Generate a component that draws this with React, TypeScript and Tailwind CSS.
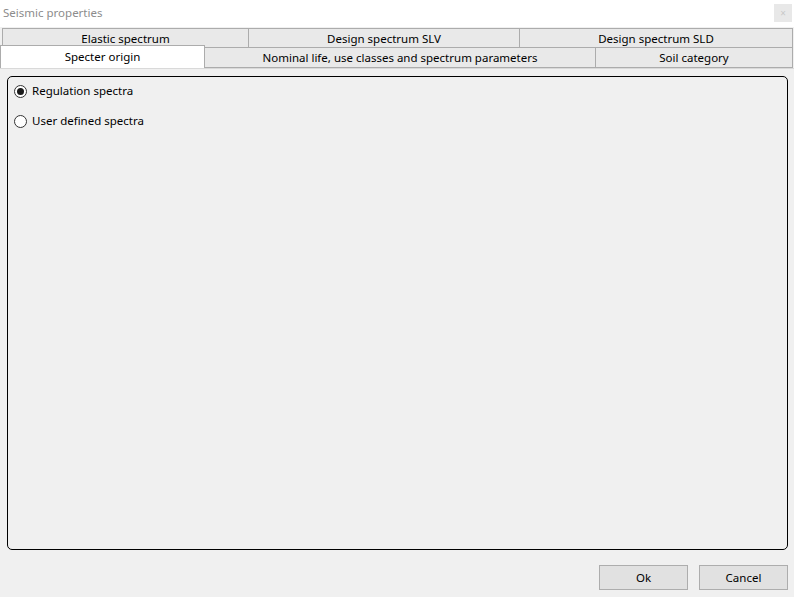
import { useState } from "react"

type Tab = {
    key: string
    label: string
    width: string
}

const topTabs: Array<Tab> = [
    { key: "elastic", label: "Elastic spectrum", width: "w-[247px]" },
    { key: "slv", label: "Design spectrum SLV", width: "w-[272px]" },
    { key: "sld", label: "Design spectrum SLD", width: "w-[274px]" },
]

const bottomTabs: Array<Tab> = [
    { key: "origin", label: "Specter origin", width: "w-[205px]" },
    { key: "nominal", label: "Nominal life, use classes and spectrum parameters", width: "w-[392px]" },
    { key: "soil", label: "Soil category", width: "w-[198px]" },
]

function Radio(props: { checked: boolean, label: string, onClick: () => void }) {
    return (
        <label className="flex items-center gap-[5px] h-[16px] cursor-default" onClick={props.onClick}>
            <span className="w-[13px] h-[13px] rounded-full border border-[#333] bg-white flex items-center justify-center">
                {props.checked ? <span className="w-[7px] h-[7px] rounded-full bg-[#1a1a1a]" /> : null}
            </span>
            <span className="text-[11.5px] text-black">{props.label}</span>
        </label>
    )
}

export default function App() {

    const [selected, setSelected] = useState("origin")
    const [spectra, setSpectra] = useState("regulation")

    return (
        <div className="w-[794px] h-[597px] bg-[#f0f0f0] flex flex-col font-['Noto_Sans','Open_Sans',sans-serif] overflow-hidden">
            {/* title bar */}
            <div className="h-[27px] bg-white flex justify-between items-start shrink-0">
                <span className="pl-[3px] pt-[4px] text-[11.5px] text-[#8c8c8c]">Seismic properties</span>
                <div className="mt-[4px] mr-[2px] w-[18px] h-[18px] bg-[#e8e8e8] flex items-center justify-center text-[10px] text-[#c8c8c8] leading-none">×</div>
            </div>

            {/* tabs */}
            <div className="flex flex-col pt-[1px] shrink-0">
                <div className="flex pl-[2px] h-[20px]">
                    {topTabs.map((tab) => (
                        <button
                            key={tab.key}
                            onClick={() => setSelected(tab.key)}
                            className={`${tab.width} h-[20px] pt-[1px] border border-[#acacac] -ml-px first:ml-0 bg-[#e9e9e9] text-[11.5px] text-black flex items-center justify-center leading-none`}
                        >
                            {tab.label}
                        </button>
                    ))}
                </div>
                <div className="flex h-[21px] items-end border-b border-[#d9d9d9]">
                    {bottomTabs.map((tab) => (
                        <button
                            key={tab.key}
                            onClick={() => setSelected(tab.key)}
                            className={selected === tab.key
                                ? `${tab.width} h-[23px] -mt-[2px] border border-[#acacac] border-b-0 bg-white text-[11.5px] text-black flex items-center justify-center leading-none z-10`
                                : `${tab.width} h-[21px] pt-[1px] border border-[#acacac] -ml-px bg-[#e9e9e9] text-[11.5px] text-black flex items-center justify-center leading-none`}
                        >
                            {tab.label}
                        </button>
                    ))}
                </div>
            </div>

            {/* content */}
            <div className="flex-1 flex flex-col px-[7px] pt-[7px]">
                <div className="h-[474px] w-[781px] border border-black rounded-[5px] flex flex-col gap-[14px] pl-[6px] pt-[6px]">
                    <Radio checked={spectra === "regulation"} label="Regulation spectra" onClick={() => setSpectra("regulation")} />
                    <Radio checked={spectra === "user"} label="User defined spectra" onClick={() => setSpectra("user")} />
                </div>
                <div className="flex justify-end gap-[11px] mt-[15px] -mr-px">
                    <button className="w-[89px] h-[25px] bg-[#e1e1e1] border border-[#adadad] text-[11.5px] text-black">Ok</button>
                    <button className="w-[89px] h-[25px] bg-[#e1e1e1] border border-[#adadad] text-[11.5px] text-black">Cancel</button>
                </div>
            </div>
        </div>
    )
}
